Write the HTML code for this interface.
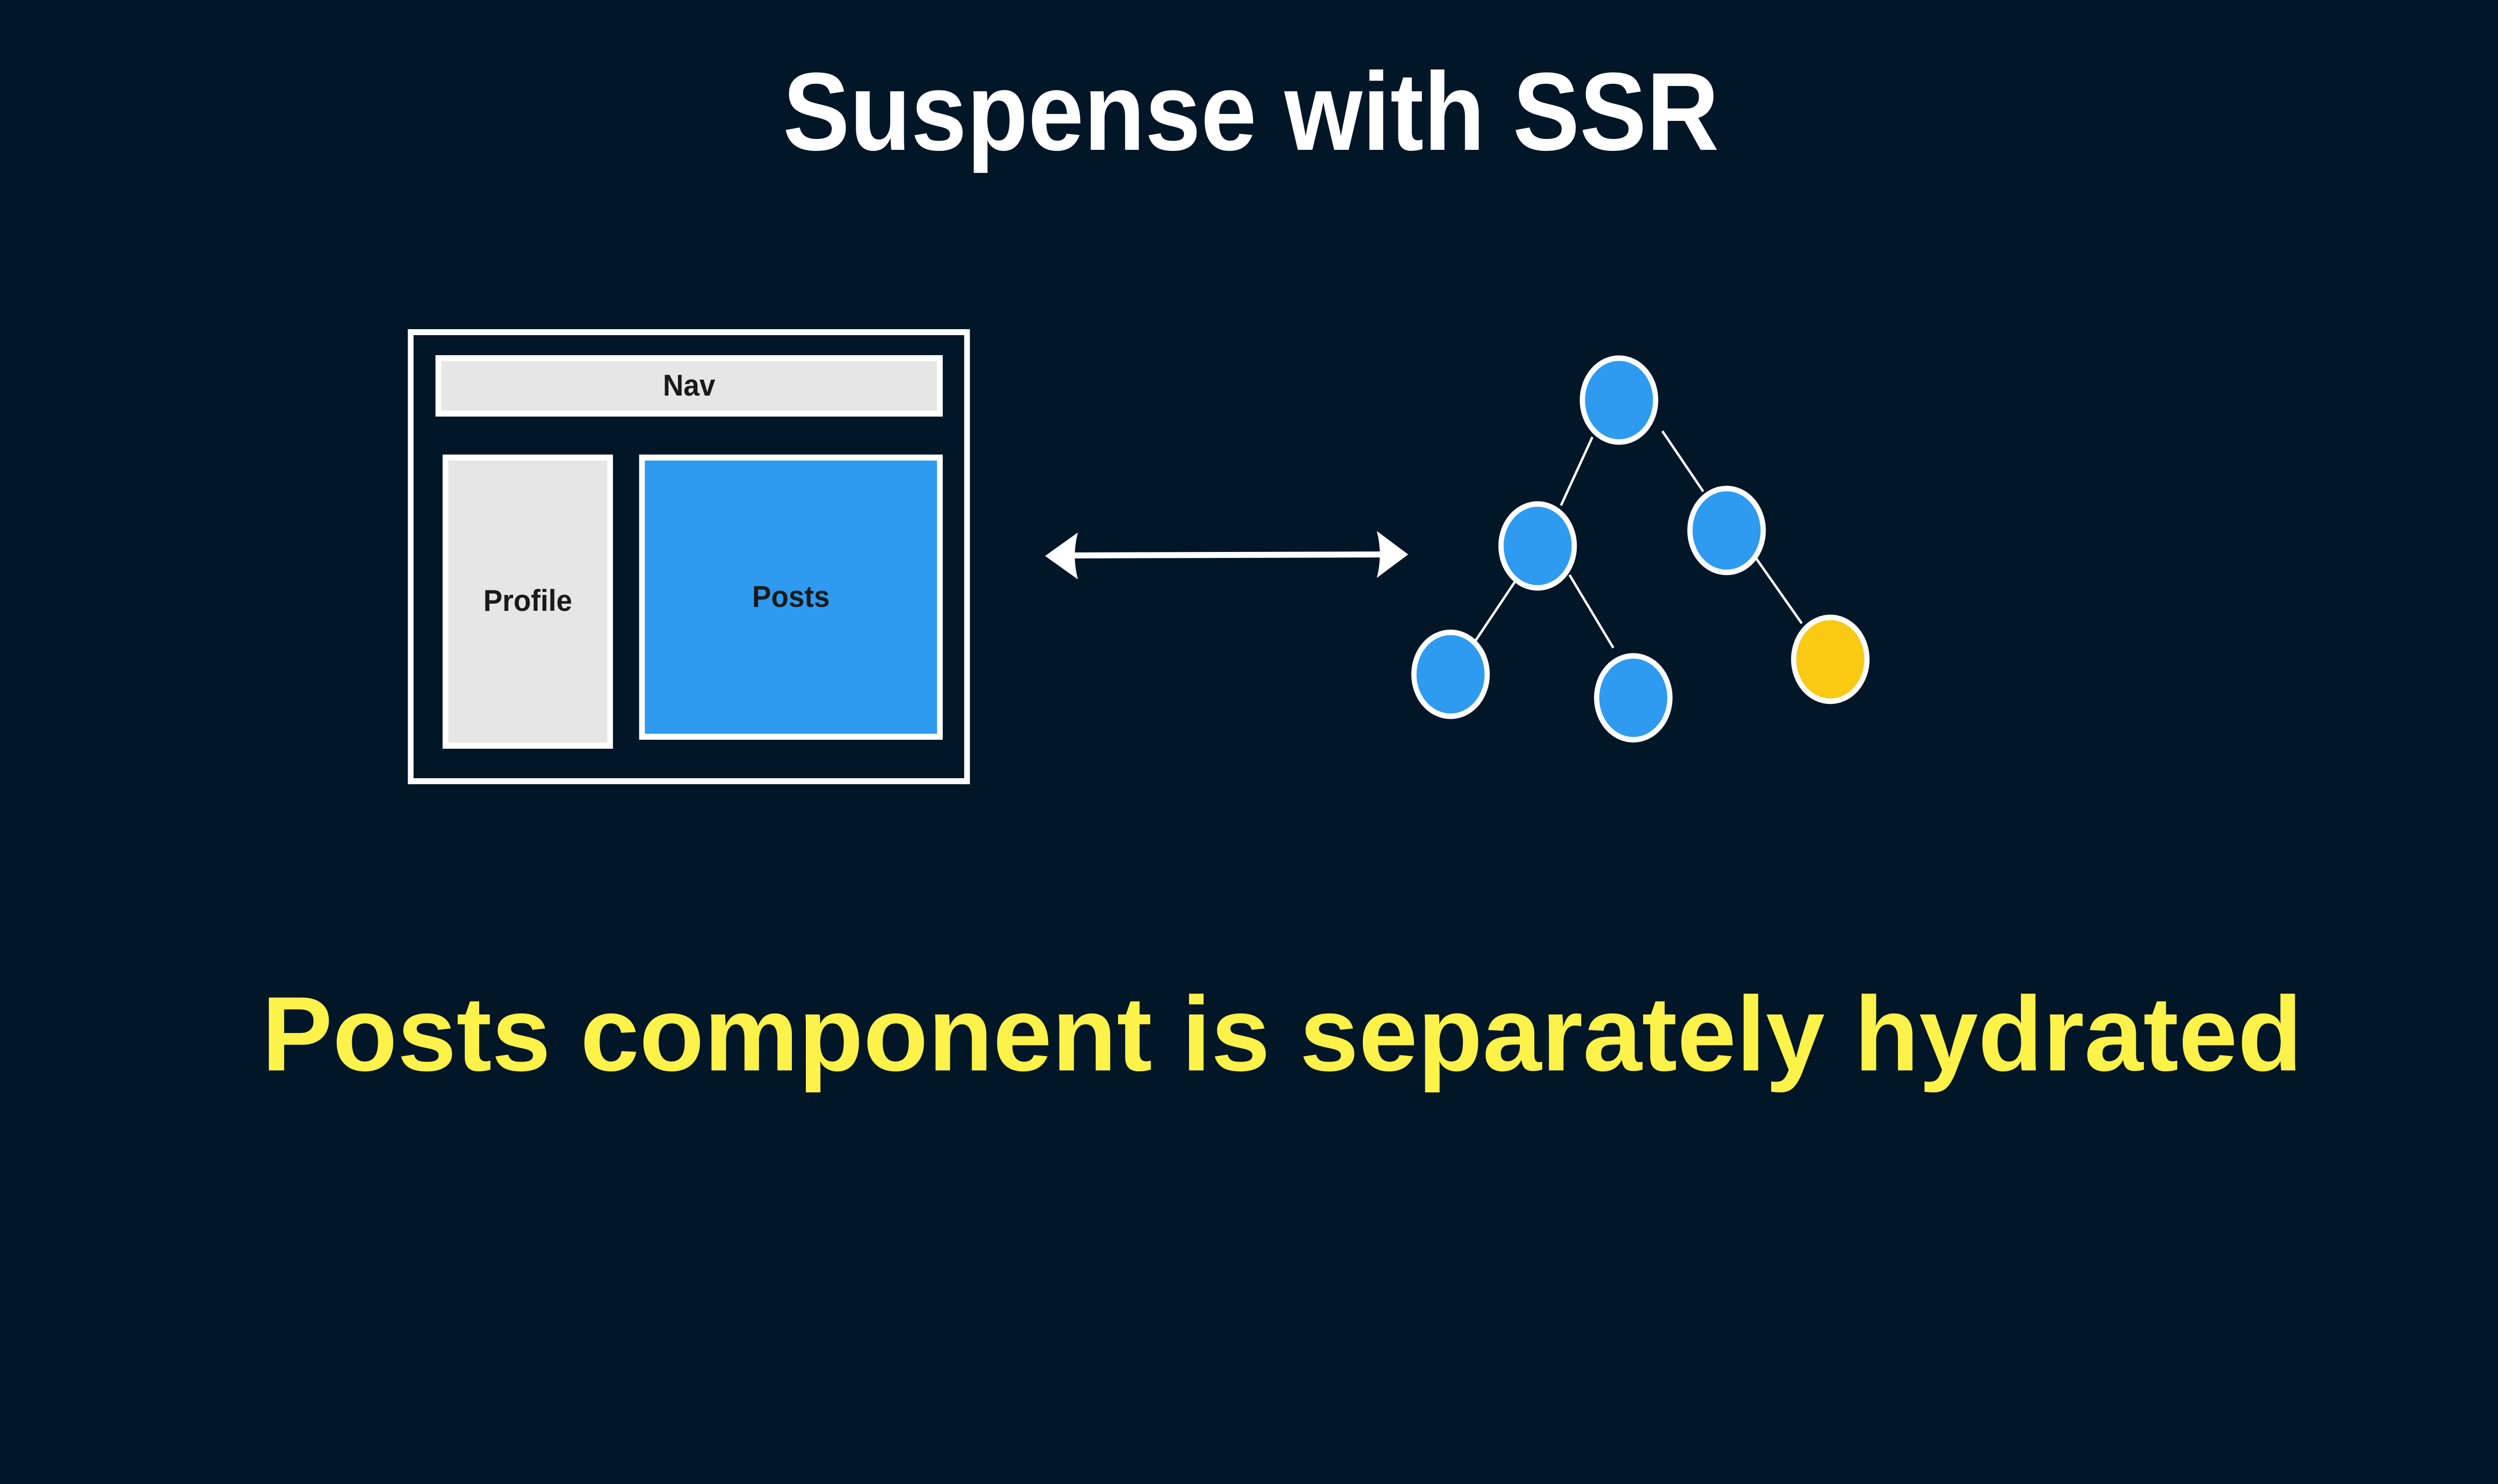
<!DOCTYPE html>
<html><head><meta charset="utf-8"><style>
html,body{margin:0;padding:0;background:#011627;width:100%;height:100%;overflow:hidden;}
svg{display:block;width:100vw;height:100vh}
</style></head><body>
<svg viewBox="0 0 5249 2971" preserveAspectRatio="none" xmlns="http://www.w3.org/2000/svg">
<rect width="5249" height="2971" fill="#011627"/>
<text x="1645" y="300" font-family="Liberation Sans, sans-serif" font-weight="bold" font-size="222" fill="#ffffff" textLength="1967" lengthAdjust="spacingAndGlyphs">Suspense with SSR</text>

<rect x="863" y="665" width="1169" height="899" fill="none" stroke="#ffffff" stroke-width="12"/>
<rect x="921" y="717" width="1054" height="111" fill="#e6e6e6" stroke="#ffffff" stroke-width="12"/>
<text x="1448" y="792" text-anchor="middle" font-family="Liberation Sans, sans-serif" font-weight="bold" font-size="60" fill="#1a1a1a">Nav</text>
<rect x="936" y="916" width="346" height="577" fill="#e6e6e6" stroke="#ffffff" stroke-width="12"/>
<text x="1109" y="1223" text-anchor="middle" font-family="Liberation Sans, sans-serif" font-weight="bold" font-size="60" fill="#1a1a1a">Profile</text>
<rect x="1349" y="916" width="626" height="559" fill="#2f9bf0" stroke="#ffffff" stroke-width="12"/>
<text x="1662" y="1215" text-anchor="middle" font-family="Liberation Sans, sans-serif" font-weight="bold" font-size="60" fill="#1a1a1a">Posts</text>

<line x1="2250" y1="1112" x2="2905" y2="1110" stroke="#fff" stroke-width="12"/>
<path d="M2196 1113 L2265 1066 Q2252 1113 2265 1160 Z" fill="#fff"/>
<path d="M2959 1110 L2893 1063 Q2906 1110 2893 1157 Z" fill="#fff"/>

<g stroke="#fff" stroke-width="5">
<line x1="3346" y1="875" x2="3280" y2="1012"/>
<line x1="3493" y1="863" x2="3579" y2="984"/>
<line x1="3183" y1="1165" x2="3089" y2="1299"/>
<line x1="3298" y1="1151" x2="3390" y2="1297"/>
<line x1="3691" y1="1119" x2="3786" y2="1248"/>
</g>
<g stroke="#fff" stroke-width="11">
<ellipse cx="3402" cy="801" rx="77" ry="84" fill="#2f9bf0"/>
<ellipse cx="3231" cy="1093" rx="77" ry="84" fill="#2f9bf0"/>
<ellipse cx="3628" cy="1062" rx="77" ry="84" fill="#2f9bf0"/>
<ellipse cx="3048" cy="1350" rx="77" ry="84" fill="#2f9bf0"/>
<ellipse cx="3432" cy="1397" rx="77" ry="84" fill="#2f9bf0"/>
<ellipse cx="3846" cy="1320" rx="77" ry="84" fill="#f9c914"/>
</g>

<text x="550" y="2143" font-family="Liberation Sans, sans-serif" font-weight="bold" font-size="212" fill="#fdf24a" textLength="4288" lengthAdjust="spacingAndGlyphs">Posts component is separately hydrated</text>
</svg>
</body></html>
